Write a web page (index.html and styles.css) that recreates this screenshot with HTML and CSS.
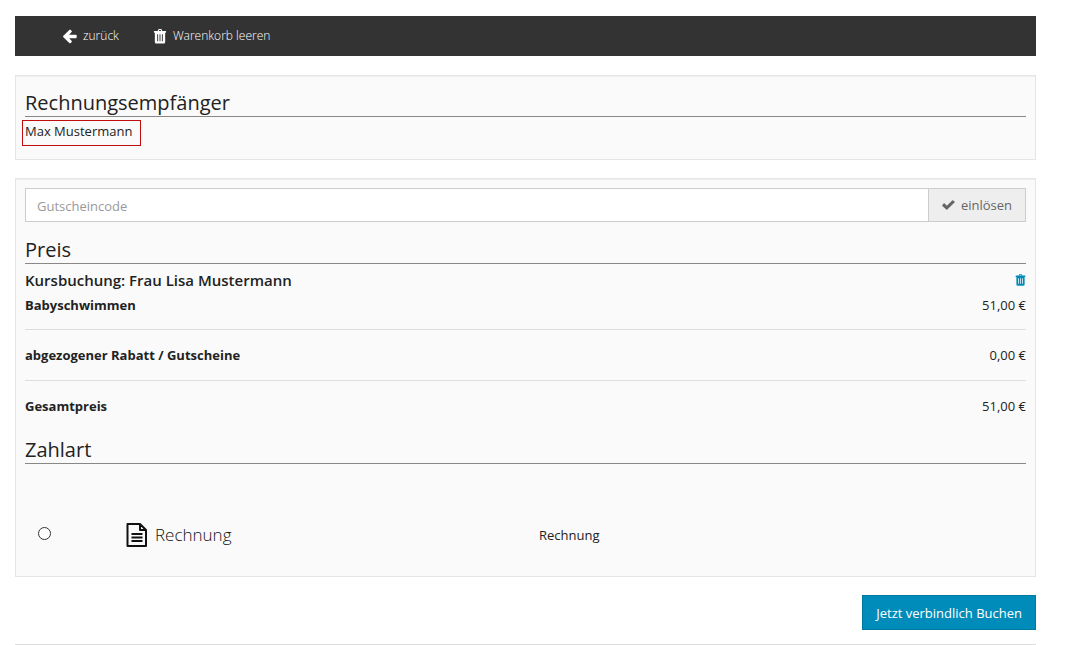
FILE: index.html
```html
<!DOCTYPE html>
<html lang="de">
<head>
    <meta charset="UTF-8">
    <meta name="viewport" content="width=device-width, initial-scale=1.0">
    <title>Warenkorb</title>
    <link rel="stylesheet" href="styles.css">
</head>
<body>
    <svg class="sprite" aria-hidden="true">
        <symbol id="trash" viewBox="0 0 14 16">
            <path fill="currentColor" fill-rule="evenodd" d="M4.5 2 5.2.6Q5.400 0 6 0h2q.6 0 .8.6L9.500 2H13q.5 0 .5.5v1q0 .5-.5.5h-.5v10q0 1.500-1.500 1.500H3Q1.500 15.500 1.500 14V4H1Q.5 4 .5 3.500v-1Q.5 2 1 2zM5.700 2h2.600L7.900 1H6.100zM4 5.500v7.500h1V5.500zm2.500 0v7.500h1V5.500zm2.500 0v7.500h1V5.500z"/>
        </symbol>
    </svg>

    <nav class="toolbar">
        <a class="toolbar-link" href="#">
            <svg class="icon" viewBox="0 0 14 14" aria-hidden="true"><path fill="currentColor" d="M.4 6.300 6.300.4q.7-.7 1.400 0l.8.8q.7.7 0 1.400L6.200 5.200h6.400q1.100 0 1.100 1v1.600q0 1-1.100 1H6.200l2.300 2.500q.7.7 0 1.400l-.8.8q-.7.7-1.400 0L.4 7.700q-.7-.7 0-1.400z"/></svg>
            zurück
        </a>
        <a class="toolbar-link" href="#">
            <svg class="icon" aria-hidden="true"><use href="#trash"/></svg>
            Warenkorb leeren
        </a>
    </nav>

    <form>
        <section class="panel recipient">
            <h2>Rechnungsempfänger</h2>
            <span class="recipient-name">Max Mustermann</span>
        </section>

        <section class="panel">
            <div class="voucher">
                <input class="voucher-input" type="text" placeholder="Gutscheincode" aria-label="Gutscheincode">
                <button class="voucher-button" type="button">
                    <svg class="icon-check" viewBox="0 0 13 10" aria-hidden="true"><path fill="currentColor" d="M.4 4.900 1.700 3.600q.5-.5 1 0L4.800 5.700 10.200.4q.5-.5 1 0l1.300 1.200q.5.500 0 1L5.300 9.600q-.5.5-1 0L.4 5.900q-.5-.5 0-1z"/></svg>
                    einlösen
                </button>
            </div>

            <h2>Preis</h2>
            <table class="prices">
                <tr class="booking">
                    <th>Kursbuchung: Frau Lisa Mustermann</th>
                    <td>
                        <button class="delete" type="button" aria-label="Buchung löschen">
                            <svg class="icon-delete" aria-hidden="true"><use href="#trash"/></svg>
                        </button>
                    </td>
                </tr>
                <tr class="course">
                    <th>Babyschwimmen</th>
                    <td>51,00 €</td>
                </tr>
                <tr class="sum">
                    <th>abgezogener Rabatt / Gutscheine</th>
                    <td>0,00 €</td>
                </tr>
                <tr class="sum">
                    <th>Gesamtpreis</th>
                    <td>51,00 €</td>
                </tr>
            </table>

            <h2>Zahlart</h2>
            <div class="payment">
                <input class="payment-radio" type="radio" name="zahlart" id="rechnung">
                <label class="payment-name" for="rechnung">
                    <svg class="icon-invoice" viewBox="0 0 22 24" aria-hidden="true"><path fill="none" stroke="currentColor" stroke-width="2" stroke-linejoin="round" d="M1.500 1h12.500l6 6v16h-18.500zM14 1v6h6M5.500 11h11M5.500 14.500h11M5.500 18h11"/></svg>
                    Rechnung
                </label>
                <span>Rechnung</span>
            </div>
        </section>

        <div class="actions">
            <button class="submit" type="submit">Jetzt verbindlich Buchen</button>
        </div>
    </form>
</body>
</html>
```

FILE: styles.css
```css
* {
    box-sizing: border-box;
}
body {
    margin: 0;
    padding: 16px 29px 0 15px;
    font-family: "Open Sans", "Noto Sans", sans-serif;
    font-size: 13px;
    line-height: 24px;
    color: #222;
    background: #fff;
}
.sprite {
    display: none;
}
button, input {
    font-family: inherit;
    font-size: 13px;
}
h2 {
    margin: 0;
    font-size: 20px;
    font-weight: 400;
    line-height: 26px;
    border-bottom: 1px solid #888;
}

/* Toolbar */
.toolbar {
    display: flex;
    align-items: center;
    gap: 34px;
    height: 40px;
    padding: 0 48px;
    background: #333;
}
.toolbar-link {
    display: flex;
    align-items: center;
    gap: 6px;
    color: #fff;
    font-size: 12px;
    font-weight: 300;
    text-decoration: none;
}
.icon {
    width: 14px;
    height: 15px;
}

/* Panels */
.panel {
    margin-top: 18px;
    padding: 9px 9px 29px;
    background: #fafafa;
    border: 1px solid #e5e5e5;
    box-shadow: inset 0 1px 0 #eee;
}
.recipient {
    margin-top: 19px;
    padding: 14px 9px 13px;
}
.recipient-name {
    display: inline-block;
    margin: 3px 0 0 -3px;
    padding: 0 8px 4px 2px;
    line-height: 20px;
    border: 1px solid #c00d0d;
    vertical-align: top;
}

/* Voucher */
.voucher {
    display: flex;
    margin-bottom: 15px;
}
.voucher-input {
    flex: 1;
    min-width: 0;
    height: 34px;
    padding: 2px 11px 0;
    color: #222;
    background: #fff;
    border: 1px solid #ccc;
    border-radius: 0;
}
.voucher-input::placeholder {
    color: #999;
}
.voucher-button {
    display: flex;
    align-items: center;
    gap: 6px;
    padding: 0 13px;
    color: #666;
    background: #eee;
    border: 1px solid #ccc;
    border-left: 0;
}
.icon-check {
    width: 13px;
    height: 10px;
}

/* Prices */
.prices {
    width: 100%;
    border-collapse: collapse;
    margin-bottom: 19px;
}
.prices th {
    padding: 0;
    text-align: left;
    font-weight: 700;
}
.prices td {
    padding: 0;
    text-align: right;
}
.booking th {
    padding: 4px 0 1px;
    font-size: 15px;
    font-weight: 600;
}
.booking td {
    padding: 2px 0 3px;
}
.delete {
    display: inline-flex;
    padding: 0;
    color: #008cba;
    background: none;
    border: 0;
    vertical-align: middle;
}
.icon-delete {
    width: 11px;
    height: 12px;
}
.course th, .course td {
    padding-bottom: 12px;
}
.sum th, .sum td {
    padding: 13px 0;
    border-top: 1px solid #ddd;
}
.sum:last-child th, .sum:last-child td {
    padding-bottom: 0;
}

/* Payment */
.payment {
    display: grid;
    grid-template-columns: 101px 413px 1fr;
    align-items: center;
    padding-top: 59px;
}
.payment-radio {
    appearance: none;
    width: 13px;
    height: 13px;
    margin: 0 0 4px 13px;
    background: #fff;
    border: 1px solid #333;
    border-radius: 50%;
}
.payment-radio:checked {
    border-width: 4px;
}
.payment-name {
    display: flex;
    align-items: center;
    gap: 7px;
    font-size: 17px;
    font-weight: 300;
    color: #111;
}
.icon-invoice {
    width: 22px;
    height: 24px;
}

/* Footer */
.actions {
    display: flex;
    justify-content: flex-end;
    padding: 18px 0 14px;
    border-bottom: 1px solid #ddd;
}
.submit {
    height: 35px;
    padding: 0 13px;
    color: #fff;
    background: #008cba;
    border: 1px solid #0079a1;
}
```
